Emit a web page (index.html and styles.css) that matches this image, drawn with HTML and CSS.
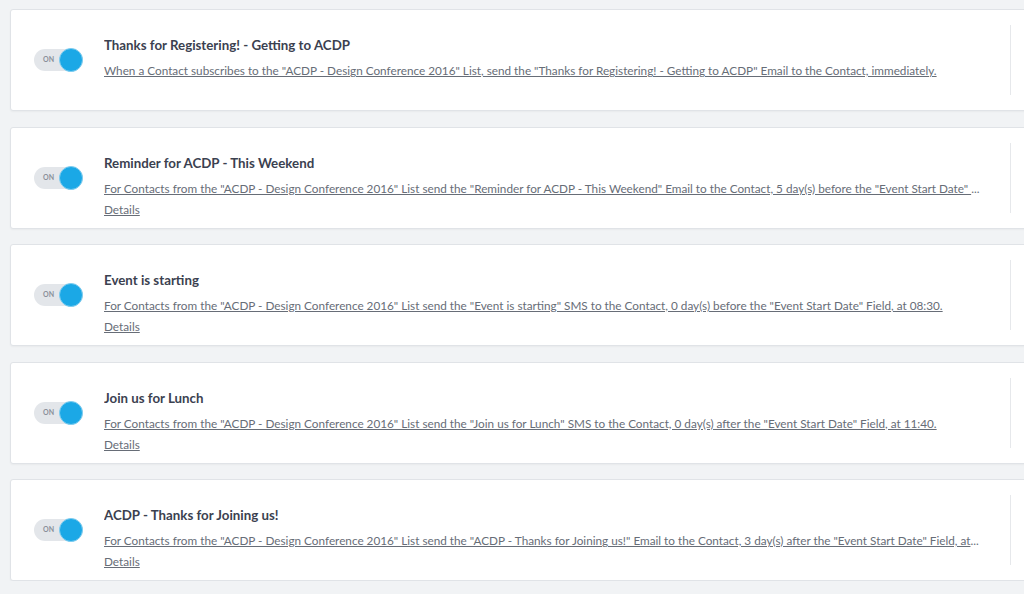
FILE: index.html
```html
<!DOCTYPE html>
<html lang="en">
<head>
  <meta charset="UTF-8" />
  <title>Automations</title>
  <link rel="stylesheet" href="styles.css">
</head>
<body>

  <div class="rule-list">

    <div class="rule-card">
      <div class="rule-toggle"><span class="toggle-label">ON</span><span class="toggle-knob"></span></div>
      <div class="rule-body">
        <div class="rule-title">Thanks for Registering! - Getting to ACDP</div>
        <a href="#" class="rule-desc">When a Contact subscribes to the "ACDP - Design Conference 2016" List, send the "Thanks for Registering! - Getting to ACDP" Email to the Contact, immediately.</a>
      </div>
      <div class="rule-side"></div>
    </div>

    <div class="rule-card">
      <div class="rule-toggle"><span class="toggle-label">ON</span><span class="toggle-knob"></span></div>
      <div class="rule-body">
        <div class="rule-title">Reminder for ACDP - This Weekend</div>
        <a href="#" class="rule-desc">For Contacts from the "ACDP - Design Conference 2016" List send the "Reminder for ACDP - This Weekend" Email to the Contact, 5 day(s) before the "Event Start Date" </a><span class="more">...</span>
        <a href="#" class="rule-details">Details</a>
      </div>
      <div class="rule-side"></div>
    </div>

    <div class="rule-card">
      <div class="rule-toggle"><span class="toggle-label">ON</span><span class="toggle-knob"></span></div>
      <div class="rule-body">
        <div class="rule-title">Event is starting</div>
        <a href="#" class="rule-desc">For Contacts from the "ACDP - Design Conference 2016" List send the "Event is starting" SMS to the Contact, 0 day(s) before the "Event Start Date" Field, at 08:30.</a>
        <a href="#" class="rule-details">Details</a>
      </div>
      <div class="rule-side"></div>
    </div>

    <div class="rule-card">
      <div class="rule-toggle"><span class="toggle-label">ON</span><span class="toggle-knob"></span></div>
      <div class="rule-body">
        <div class="rule-title">Join us for Lunch</div>
        <a href="#" class="rule-desc">For Contacts from the "ACDP - Design Conference 2016" List send the "Join us for Lunch" SMS to the Contact, 0 day(s) after the "Event Start Date" Field, at 11:40.</a>
        <a href="#" class="rule-details">Details</a>
      </div>
      <div class="rule-side"></div>
    </div>

    <div class="rule-card">
      <div class="rule-toggle"><span class="toggle-label">ON</span><span class="toggle-knob"></span></div>
      <div class="rule-body">
        <div class="rule-title">ACDP - Thanks for Joining us!</div>
        <a href="#" class="rule-desc">For Contacts from the "ACDP - Design Conference 2016" List send the "ACDP - Thanks for Joining us!" Email to the Contact, 3 day(s) after the "Event Start Date" Field, at</a><span class="more">...</span>
        <a href="#" class="rule-details">Details</a>
      </div>
      <div class="rule-side"></div>
    </div>

  </div>

</body>
</html>
```

FILE: styles.css
```css
body {
  font-family: "Lato", "Liberation Sans", sans-serif;
  margin: 0;
  padding: 0;
  background-color: #f1f3f5;
  color: #3b4150;
  overflow: hidden;
}

.rule-list {
  display: flex;
  flex-direction: column;
  gap: 15.5px;
  padding: 9px 0 0 10px;
  width: 1040px;
}

.rule-card {
  display: flex;
  align-items: center;
  height: 100px;
  background-color: white;
  border: 1px solid #e0e3e7;
  border-radius: 3px;
  box-shadow: 0 1px 2px rgba(0, 0, 0, 0.04);
}

.rule-toggle {
  position: relative;
  flex: none;
  width: 49px;
  height: 22px;
  margin: 0 21px 0 23px;
  background-color: #e3e6ea;
  border-radius: 11px;
}

.toggle-label {
  position: absolute;
  left: 9px;
  top: 6px;
  font-size: 7px;
  font-weight: bold;
  color: #8a9099;
}

.toggle-knob {
  position: absolute;
  right: 0;
  top: -1px;
  width: 22px;
  height: 22px;
  border-radius: 50%;
  background-color: #1ba8e6;
  border: 1px solid #7fcdf0;
}

.rule-body {
  flex: 1;
  align-self: flex-start;
  padding-top: 27px;
  white-space: nowrap;
  overflow: hidden;
}

.rule-title {
  font-size: 13.3px;
  font-weight: bold;
  color: #3b4150;
  margin-bottom: 6px;
}

.rule-desc,
.rule-details {
  font-size: 11.75px;
  color: #676d77;
  text-decoration: underline;
}

.more {
  font-size: 11.75px;
  color: #676d77;
}

.rule-details {
  display: block;
  margin-top: 6px;
  width: max-content;
}

.rule-side {
  flex: none;
  align-self: stretch;
  width: 38px;
  margin: 15px 0 15px 20px;
  border-left: 1px solid #e6e8eb;
}
```
